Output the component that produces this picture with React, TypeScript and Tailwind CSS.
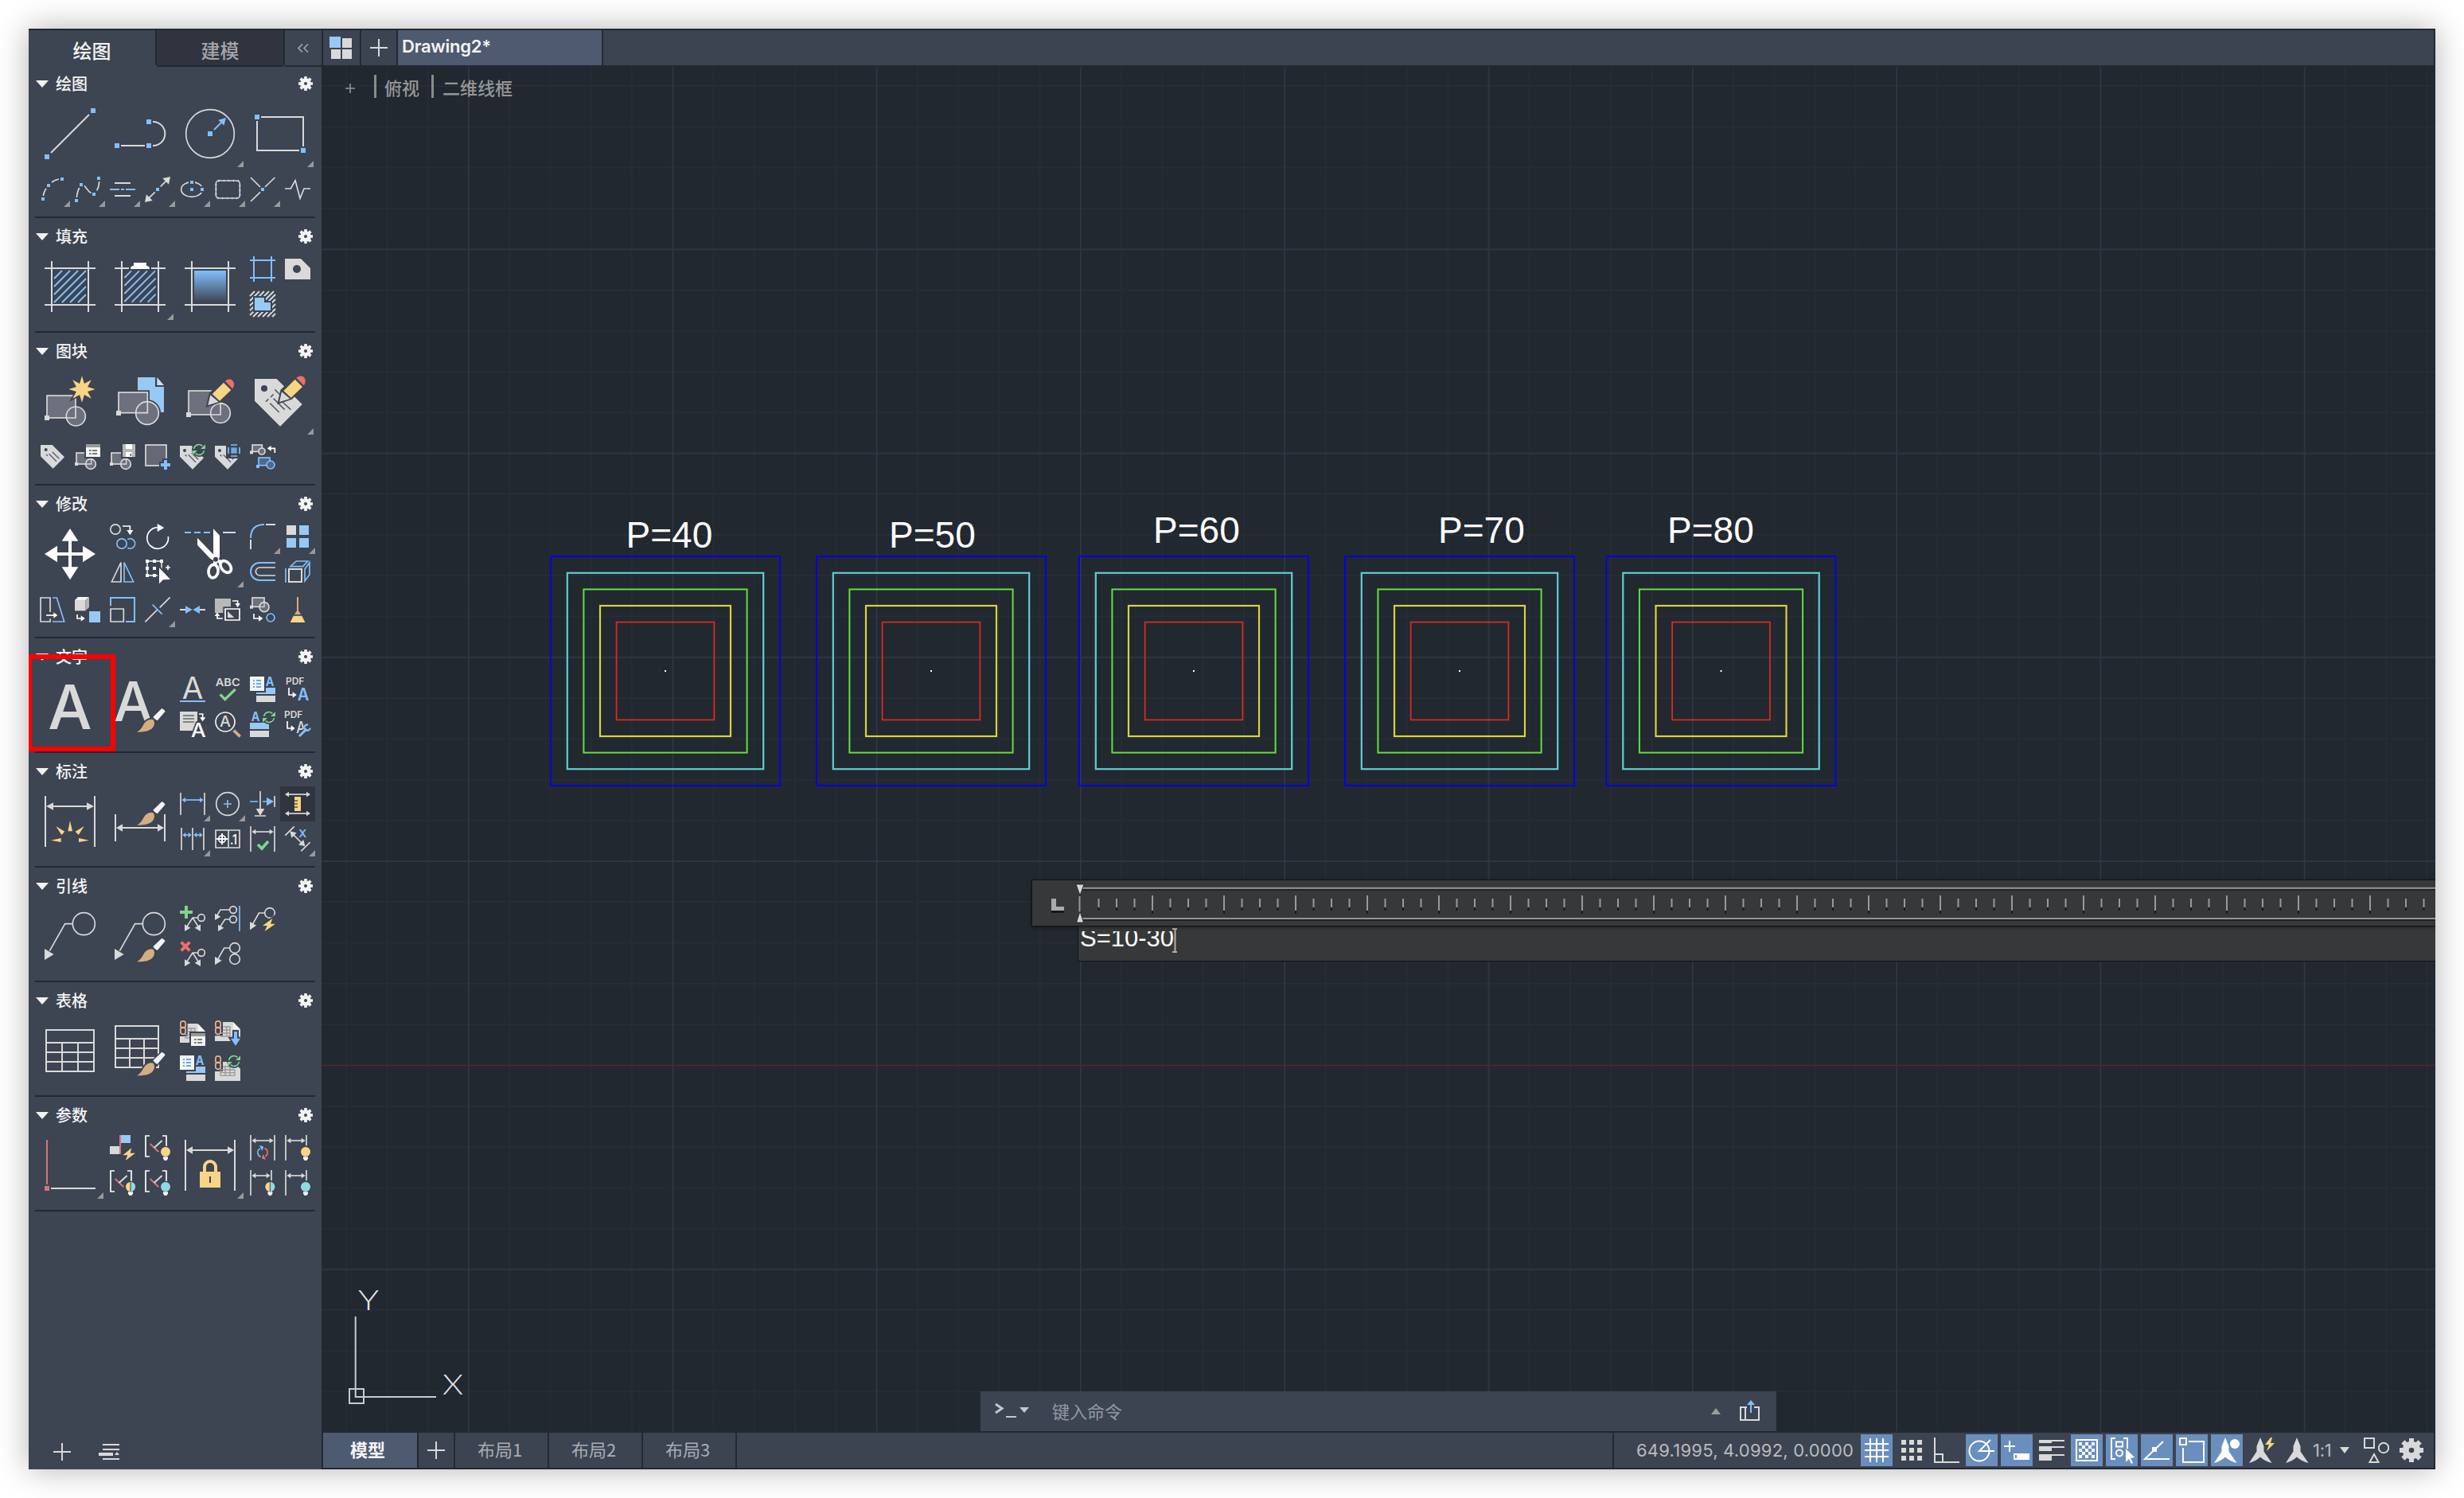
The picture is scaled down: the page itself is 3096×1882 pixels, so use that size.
import React from "react";

const G = "#d9d9d9";
const B = "#80c0fc";
const LB = "#97c9f5";
const Y = "#f8d486";
const R = "#ee6f69";
const GR = "#7dd68a";
const TAN = "#d2ae80";
const TEAL = "#8cdbe4";
const BG = "#3d4452";
const BF = "#6d717d";
const W = "#ffffff";

type Kids = { children?: React.ReactNode };

/* Tool cells. Drawing units are a third of a pixel; x and y give the cell's origin. */
function Big({ x, y, tri, children }: Kids & { x: number; y: number; tri?: boolean }) {
  return (
    <svg className="col-span-2 row-span-2 size-22 overflow-visible" viewBox={`${x} ${y} 264 264`} fill="none">
      {children}
      {tri && <path d={`M${x + 258} ${y + 234}v24h-24z`} fill="#999" />}
    </svg>
  );
}
function Sm({ x, y, tri, first, children }: Kids & { x: number; y: number; tri?: boolean; first?: string }) {
  return (
    <svg className={`size-11 overflow-visible ${first ?? ""}`} viewBox={`${x} ${y} 132 132`} fill="none">
      {children}
      {tri && <path d={`M${x + 132} ${y + 108}v24h-24z`} fill="#999" />}
    </svg>
  );
}

const Sq = ({ p, s = 12, c = B }: { p: number[][]; s?: number; c?: string }) => (
  <>{p.map(([x, y], i) => <rect key={i} x={x} y={y} width={s} height={s} fill={c} />)}</>
);
const L = ({ d, c = G, w = 5, f = "none" }: { d: string; c?: string; w?: number; f?: string }) => (
  <path d={d} stroke={c} strokeWidth={w} fill={f} />
);
const F = ({ d, c = G, o }: { d: string; c?: string; o?: boolean }) => (
  <path d={d} fill={c} stroke={o ? BG : "none"} strokeWidth={o ? 12 : 0} paintOrder="stroke" />
);
const C = ({ x, y, r, c = G, w = 5, f = "none" }: { x: number; y: number; r: number; c?: string; w?: number; f?: string }) => (
  <circle cx={x} cy={y} r={r} stroke={c} strokeWidth={w} fill={f} />
);
/* Letter used inside an icon, fitted between x and x+w with its baseline at y. */
const T = ({ x, y, w, s, c = G, b = 600, t = "A", o }: { x: number; y: number; w: number; s: number; c?: string; b?: number; t?: string; o?: boolean }) => (
  <text x={x} y={y} textLength={w} lengthAdjust="spacingAndGlyphs" fontSize={s} fontWeight={b} fill={c}
    fontFamily="Inter, sans-serif" stroke={o ? BG : "none"} strokeWidth={o ? 10 : 0} paintOrder="stroke">{t}</text>
);
/* Horizontal double-headed dimension arrow. */
const Dim = ({ a, b, y, c = G, h = 18, k = 10, w = 5 }: { a: number; b: number; y: number; c?: string; h?: number; k?: number; w?: number }) => (
  <>
    <path d={`M${a + h - 2} ${y}H${b - h + 2}`} stroke={c} strokeWidth={w} />
    <path d={`M${a} ${y}l${h} ${-k}v${2 * k}zM${b} ${y}l${-h} ${-k}v${2 * k}z`} fill={c} />
  </>
);
const Brush = ({ dy }: { dy: number }) => (
  <g transform={`translate(0 ${dy})`}>
    <path d="M426 740C444 730 448 715 456 704Q468 691 484 692Q493 696 492 709C488 734 462 741 426 740Z" fill={TAN} stroke={BG} strokeWidth="12" paintOrder="stroke" />
    <path d="M487 683L520 651Q528 655 533 662L503 697Q492 692 487 683Z" fill="#f4f4f4" stroke={BG} strokeWidth="10" paintOrder="stroke" />
  </g>
);
const Pencil = ({ dx = 0, dy = 0 }: { dx?: number; dy?: number }) => (
  <g transform={`translate(${dx} ${dy})`}>
    <path d="M694 327L704 284L760 230Q775 222 788 234Q797 250 786 264L738 312Z" fill={BG} stroke={BG} strokeWidth="12" />
    <path d="M694 327L703 289L734 315Z" fill={G} />
    <path d="M710 285L753 242L781 270L738 311Z" fill={Y} />
    <path d="M758 236Q774 222 787 234Q798 250 786 265Z" fill={R} />
  </g>
);
const Refresh = ({ x, y, r = 19, a = GR, b = GR }: { x: number; y: number; r?: number; a?: string; b?: string }) => (
  <g transform={`translate(${x} ${y}) scale(${r / 19})`}>
    <circle r="27" fill={BG} />
    <path d="M-19 -3A19 19 0 0 1 13 -14" stroke={a} strokeWidth="5" />
    <path d="M24 -20V-3H6Z" fill={a} />
    <path d="M19 3A19 19 0 0 1 -13 14" stroke={b} strokeWidth="5" />
    <path d="M-24 20V3H-6Z" fill={b} />
  </g>
);
const Hatch = ({ x, y, s, step, off = 0, c = B, w = 6 }: { x: number; y: number; s: number; step: number; off?: number; c?: string; w?: number }) => {
  let d = "";
  for (let k = step - off; k < 2 * s; k += step) {
    const x1 = Math.max(0, k - s);
    const x2 = Math.min(s, k);
    d += `M${x + x1} ${y + k - x1}L${x + x2} ${y + k - x2}`;
  }
  return <path d={d} stroke={c} strokeWidth={w} />;
};
const MiniBlock = ({ dx = 0 }: { dx?: number }) => (
  <g transform={`translate(${dx} 0)`}>
    <rect x="198" y="507" width="57" height="42" fill={BF} stroke={G} strokeWidth="5" />
    <C x={252} y={549} r={19} f={BF} />
    <L d="M254 530V549H234" w={4} />
    <Sq p={[[192, 543]]} s={12} c={G} />
  </g>
);
const Panel = ({ x, y }: { x: number; y: number }) => (
  <g transform={`translate(${x} ${y})`}>
    <path d="M-6 -6H60V54H-6Z" fill={BG} />
    <path d="M0 12H54V48H0Z" fill="#f4f4f4" />
    <path d="M0 0H54V12H0Z" fill="#999" />
    <path d="M12 24H20M24 24H42M12 36H20M24 36H42" stroke="#555" strokeWidth="5" />
  </g>
);
const TextAlign = ({ dx = 0, dy = 0 }: { dx?: number; dy?: number }) => (
  <g transform={`translate(${dx} ${dy})`}>
    <F d="M852 180H906V234H852Z" c="#f4f4f4" />
    <L d="M864 195H870M876 195H894M864 207H870M876 207H894M864 219H870M876 219H894" c="#3f8ae0" />
    <T x={911} y={216} w={32} s={49} c={B} b={700} />
    <F d="M876 246V240H912V222H948V246Z" c={LB} />
    <F d="M876 252H948V276H876Z" />
  </g>
);
const Tag = ({ dx = 0 }: { dx?: number }) => (
  <g transform={`translate(${dx} 0)`}>
    <F d="M588 480H632L678 526L636 569L588 521Z" />
    <circle cx="606" cy="498" r="6" fill={BG} />
    <L d="M620 514L648 542M632 508L658 532M608 514L614 520" c="#5b5f66" w={4} />
  </g>
);
const Link = ({ x, y }: { x: number; y: number }) => (
  <g transform={`translate(${x} ${y})`} stroke="#eab48a" strokeWidth="5">
    <rect x="2.5" y="2.5" width="19" height="26" rx="9" />
    <rect x="2.5" y="26" width="19" height="26" rx="9" />
  </g>
);
const Bulb = ({ x, y, c, half }: { x: number; y: number; c: string; half?: boolean }) => (
  <g transform={`translate(${x} ${y})`}>
    <circle r="22" fill={BG} />
    <path d="M-9 19H9V26L4 33H-4L-9 26Z" fill="#f4f4f4" />
    <circle r="18" fill={c} />
    {half && <path d="M0 -18A18 18 0 0 1 0 18Z" fill={TEAL} />}
    {half && <path d="M0 -18V18" stroke={BG} strokeWidth="3" />}
  </g>
);
const Bracket = ({ dx = 0, dy = 0, c, half }: { dx?: number; dy?: number; c: string; half?: boolean }) => (
  <g transform={`translate(${dx} ${dy})`}>
    <L d="M474 801H459V879H474M522 801H537V840" c={W} />
    <L d="M476 831L508 862" c="#d67575" w={6} />
    <L d="M491 846L521 819" w={6} />
    <Bulb x={534} y={861} c={c} half={half} />
  </g>
);
const Leader = ({ dx = 0 }: { dx?: number }) => (
  <g transform={`translate(${dx} 0)`}>
    <C x={226} y={2} r={42} />
    <L d="M184 2H155L97 104" />
    <F d="M78 96L113 117L78 138Z" />
  </g>
);
const FrameLines = ({ dx = 0 }: { dx?: number }) => (
  <path transform={`translate(${dx} 0)`} d="M168 951H360M168 1089H360M195 924V1116M333 924V1116" stroke={G} strokeWidth="6" />
);

function Gear({ size, color }: { size: string; color: string }) {
  return (
    <svg className={size} viewBox="-9 -9 18 18" fill="none" stroke={color}>
      <circle r="4.4" strokeWidth="4.8" />
      {[0, 45, 90, 135].map((a) => (
        <path key={a} transform={`rotate(${a})`} d="M0 -9V-5M0 5V9" strokeWidth="3.6" />
      ))}
    </svg>
  );
}

const star = Array.from({ length: 16 }, (_, i) => {
  const r = i % 2 ? 23 : 50;
  const a = (i * Math.PI) / 8;
  return `${219 + r * Math.sin(a)},${267 - r * Math.cos(a)}`;
}).join(" ");

function Section({ title, main, row }: { title: string; main: React.ReactNode; row?: React.ReactNode }) {
  return (
    <section className="mx-2 border-b-2 border-[#222933] pb-3">
      <header className="flex h-[42px] items-center pt-1 pr-[3px]">
        <svg className="ml-px h-[9px] w-4" viewBox="0 0 16 9"><path d="M0 0H16L8 9Z" fill="#f4f4f4" /></svg>
        <h2 className="ml-[9px] text-[20px] leading-none font-medium text-[#f4f4f4]">{title}</h2>
        <span className="ml-auto"><Gear size="size-[18px]" color="#f4f4f4" /></span>
      </header>
      <div className="grid grid-cols-8 grid-rows-[44px_44px]">{main}</div>
      {row && <div className="mt-1 flex">{row}</div>}
    </section>
  );
}

function Sidebar() {
  return (
    <aside className="flex w-[368px] shrink-0 flex-col bg-[#3d4452]">
      <nav className="flex h-11 bg-[#222933] text-[24px] font-medium">
        <div className="flex h-[46px] w-[159px] items-center justify-center bg-[#3d4452] pt-1 text-[#f4f4f4]">绘图</div>
        <div className="ml-0.5 flex h-11 w-[159px] items-center justify-center border-b-0 bg-[#30343f] pt-[5px] text-[#a5a6a9] shadow-[0_2px_0_#222933]">建模</div>
        <div className="ml-0.5 flex h-11 w-[46px] items-center justify-center bg-[#3d4452] shadow-[0_2px_0_#222933]">
          <svg className="h-[11px] w-[14px]" viewBox="0 0 14 11" fill="none" stroke="#a5a6a9" strokeWidth="1.6">
            <path d="M6 .5L1 5.5L6 10.5M13 .5L8 5.5L13 10.5" />
          </svg>
        </div>
      </nav>
      <Section
        title="绘图"
        main={<>
          <Big x={132} y={312}><L d="M192 516L336 372" w={6} /><Sq s={18} p={[[168, 522], [342, 348]]} /></Big>
          <Big x={396} y={312}><L d="M456 489H546M576 399H577A45 45 0 0 1 577 489H576" w={6} /><Sq s={18} p={[[432, 480], [552, 480], [552, 390]]} /></Big>
          <Big x={660} y={312} tri><C x={792} y={444} r={91} /><Sq s={18} p={[[783, 435]]} /><L d="M807 429L837 399" c={B} w={6} /><F d="M852 384L823 392L844 413Z" c={B} /></Big>
          <Big x={924} y={312} tri><L d="M984 381H1143V492M969 396V507H1128" w={6} /><Sq s={18} p={[[960, 372], [1134, 498]]} /></Big>
        </>}
        row={<>
          <Sm x={132} y={588} tri><L d="M163 678Q166 661 174 650M195 627Q207 618 222 615" /><Sq p={[[156, 684], [177, 633], [228, 609]]} /></Sm>
          <Sm x={264} y={588} tri><L d="M289 684Q292 660 299 648M318 640L336 662L343 668M365 658Q373 645 374 624" /><Sq p={[[282, 690], [300, 630], [348, 666], [366, 606]]} /></Sm>
          <Sm x={396} y={588} tri><L d="M432 630H492M432 678H492" w={6} /><L d="M414 654H450M456 654H468M474 654H510" c={B} w={6} /></Sm>
          <Sm x={528} y={588} tri><L d="M584 664L562 686M605 643L626 622" /><F d="M546 702L552 673L575 696ZM642 606L613 612L636 635Z" /><Sq p={[[588, 648]]} /></Sm>
          <Sm x={660} y={588} tri><ellipse cx="723" cy="654" rx="40" ry="28" stroke={G} strokeWidth="5" /><Sq s={24} c={BG} p={[[711, 615], [750, 642]]} /><Sq p={[[717, 621], [756, 648], [717, 648]]} /></Sm>
          <Sm x={792} y={588} tri><rect x="814" y="621" width="90" height="66" rx="11" stroke={G} strokeWidth="4.5" /><rect x="814" y="621" width="90" height="66" rx="11" stroke={G} strokeWidth="8" strokeDasharray="3 15" /></Sm>
          <Sm x={924} y={588} tri><L d="M945 609L981 645M1036 609L999 645M945 699L981 664" /><Sq p={[[984, 648]]} /></Sm>
          <Sm x={1056} y={588}><L d="M1074 651H1096L1113 620L1131 688L1146 651H1170" /></Sm>
        </>}
      />
      <Section
        title="填充"
        main={<>
          <Big x={132} y={888}><FrameLines /><Hatch x={204} y={960} s={120} step={30} /></Big>
          <Big x={396} y={888} tri><FrameLines dx={264} /><path d="M486 940H570V960H486Z" fill={BG} /><Hatch x={469} y={961} s={118} step={30} off={4} /><F d="M492 954Q492 942 504 942L504 930H552V942Q564 942 564 954Z" c={W} /></Big>
          <Big x={660} y={888}>
            <defs><linearGradient id="fade" x1="0" y1="0" x2="0" y2="1"><stop offset="0" stopColor={B} /><stop offset="1" stopColor={BG} /></linearGradient></defs>
            <FrameLines dx={528} /><rect x="732" y="960" width="120" height="120" fill="url(#fade)" />
          </Big>
          <Sm x={924} y={888}><L d="M942 921H1038M942 987H1038M957 906V1002M1023 906V1002" c={B} w={6} /></Sm>
          <Sm x={1056} y={888}><F d="M1074 915H1134L1170 951V993H1074Z" /><circle cx="1119" cy="954" r="15" fill={BG} /></Sm>
          <Sm x={924} y={1020} first="col-start-7"><Hatch x={942} y={1038} s={96} step={18} c={G} /><path d="M954 1056H1002V1074H1026V1116H954Z" fill={BG} /><F d="M960 1062H996V1080H1020V1110H960Z" c={LB} /></Sm>
        </>}
      />
      <Section
        title="图块"
        main={<>
          <Big x={42} y={180}>
            <rect x="87" y="291" width="108" height="84" fill={BF} stroke={G} strokeWidth="5" /><C x={196} y={369} r={36} f={BF} /><L d="M195 331V375H162" /><Sq p={[[78, 366]]} s={18} c={G} />
            <polygon points={star} fill={Y} stroke={BG} strokeWidth="10" paintOrder="stroke" />
          </Big>
          <Big x={306} y={180}>
            <F d="M429 222H495V258H528V354H429Z" c={LB} /><F d="M502 222L528 252H502Z" c="#c4e0fb" />
            <rect x="357" y="279" width="109" height="77" fill={BF} stroke={BG} strokeWidth="16" /><circle cx="465" cy="357" r="51" fill={BG} />
            <rect x="357" y="279" width="109" height="77" fill={BF} stroke={G} strokeWidth="5" /><C x={465} y={357} r={43} f={BF} /><L d="M466 314V356H423" /><Sq p={[[348, 348]]} s={18} c={G} />
          </Big>
          <Big x={570} y={180}>
            <rect x="621" y="273" width="120" height="90" fill={BF} stroke={G} strokeWidth="5" /><C x={741} y={357} r={37} f={BF} /><L d="M741 320V363H706" /><Sq p={[[612, 354]]} s={18} c={G} /><Pencil />
          </Big>
          <Big x={834} y={180} tri>
            <F d="M870 228H953L1049 324L966 407L870 311Z" /><circle cx="906" cy="264" r="12" fill={BG} />
            <L d="M928 320L962 354M912 314L922 304M930 297L941 286M946 268L966 288M941 302L983 344M972 312L1006 344" c="#5b5f66" />
            <Pencil dx={269} dy={-12} />
          </Big>
        </>}
        row={<>
          <Sm x={42} y={456}><F d="M63 477H107L153 523L110 566L63 520Z" /><circle cx="83" cy="495" r="6" fill={BG} /><L d="M95 511L123 539M107 503L133 529M84 512L90 518" c="#5b5f66" w={4} /></Sm>
          <Sm x={174} y={456}><MiniBlock /><Panel x={234} y={474} /></Sm>
          <Sm x={306} y={456}><MiniBlock dx={132} /><F d="M366 468H426V528H366Z" c={BG} /><F d="M372 474H420V522H372Z" c="#b8b8b8" /><F d="M384 474H408V492H384ZM384 504H408V522H384Z" c={W} /><L d="M403 510V519" c="#444" w={4} /></Sm>
          <Sm x={438} y={456}><rect x="459" y="477" width="78" height="78" fill="#646975" stroke={G} strokeWidth="5" /><L d="M534 528V576M510 552H558" c={BG} w={24} /><L d="M534 534V570M516 552H552" c={B} w={12} /></Sm>
          <Sm x={570} y={456}><Tag /><Refresh x={660} y={495} r={19} /></Sm>
          <Sm x={702} y={456}><Tag dx={132} /><F d="M762 468H822V528H762Z" c={BG} /><F d="M781 487H803V509H781Z" c="#6fa8e0" /><L d="M780 477H804M780 519H804M771 486V510M813 486V510" c={B} /></Sm>
          <Sm x={834} y={456}>
            <rect x="861" y="477" width="37" height="25" fill={BF} stroke={G} strokeWidth="5" /><C x={897} y={501} r={12} f={BF} /><Sq p={[[852, 499]]} c={G} />
            <L d="M946 507V490H930" c={W} /><F d="M917 490L932 480V500Z" c={W} />
            <rect x="885" y="525" width="42" height="29" fill="#4f6a8b" stroke={B} strokeWidth="5" /><C x={930} y={552} r={15} c={B} f="#4f6a8b" /><Sq p={[[876, 552]]} />
          </Sm>
        </>}
      />
      <Section
        title="修改"
        main={<>
          <Big x={42} y={756}><L d="M174 830V950M120 888H230" c={W} w={12} /><F c={W} d="M174 792L205 839H143ZM174 985L205 937H143ZM78 888L126 857V919ZM270 888L222 857V919Z" /></Big>
          <Sm x={306} y={756}><C x={345} y={795} r={18.5} /><L d="M372 783H400V802" c={W} /><F d="M400 817L388 798H412Z" c={W} /><C x={369} y={849} r={18.5} c={B} /><L d="M391 833A18.5 18.5 0 1 1 391 865" c={B} /></Sm>
          <Sm x={438} y={756}><L d="M544 822A40 40 0 1 1 503 788" c={W} /><F d="M503 774L529 789L503 804Z" c={W} /></Sm>
          <Big x={570} y={756} tri>
            <L d="M606 807H630M642 807H666M678 807H702" c={B} w={6} /><L d="M750 807H798" w={6} />
            <F d="M654 827L724 900L714 912Q704 908 697 900L654 854Z" c={W} /><F d="M714 793L738 818V900L728 916L714 900Z" c={W} />
            <ellipse cx="714" cy="953" rx="18" ry="25" transform="rotate(8 714 953)" stroke={W} strokeWidth="11" />
            <ellipse cx="761" cy="936" rx="17" ry="25" transform="rotate(-38 761 936)" stroke={W} strokeWidth="11" />
            <L d="M722 912L720 932M728 912L744 920" c={W} w={14} /><circle cx="723" cy="908" r="9" fill={BG} />
          </Big>
          <Sm x={834} y={756} tri><L d="M855 828Q855 777 906 777" c={B} w={6} /><L d="M912 777H948M855 834V870" w={6} /></Sm>
          <Sm x={966} y={756} tri><Sq s={36} c={G} p={[[990, 780]]} /><Sq s={36} c={LB} p={[[1038, 780], [990, 828], [1038, 828]]} /></Sm>
          <Sm x={306} y={888}><L d="M331 993L366 920V993Z" /><L d="M413 993L378 920V993Z" c={B} /></Sm>
          <Sm x={438} y={888}><L d="M465 915H519V969H465Z" c={W} w={4} /><Sq c={W} p={[[459, 909], [486, 909], [513, 909], [459, 936], [486, 936], [459, 963], [486, 963]]} /><F d="M510 940V1000L525 985L552 984Z" c={W} o /><L d="M534 939H552M543 930V948" c={W} /></Sm>
          <Sm x={834} y={888}><L d="M948 921H888A33 33 0 0 0 888 987H948" c={B} w={6} /><L d="M948 939H889A15 15 0 0 0 889 969H948" /></Sm>
          <Sm x={966} y={888}><L d="M999 945H1047V993H999Z" w={6} /><L d="M987 942V996M1005 935L1027 915H1070L1052 935ZM1059 990V945L1077 920V965Z" c={B} /></Sm>
        </>}
        row={<>
          <Sm x={42} y={1032}><L d="M99 1107V1053H63V1143H99V1132" /><L d="M108 1053H124L152 1143H108" c={B} /><L d="M84 1119H114" c={W} /><F d="M127 1119L112 1108V1130Z" c={W} /></Sm>
          <Sm x={174} y={1032}><F d="M192 1062H232V1102H192Z" /><F d="M192 1062L204 1050H246L232 1062Z" c="#f4f4f4" /><F d="M232 1062L246 1050V1089L232 1102Z" c="#b5b5b5" /><Sq s={42} c={LB} p={[[246, 1104]]} /><L d="M201 1116V1131H216" c={W} /><F d="M230 1131L215 1120V1142Z" c={W} /></Sm>
          <Sm x={306} y={1032}><L d="M327 1084V1053H417V1143H384" c={B} w={6} /><L d="M327 1095H376V1143H327Z" /></Sm>
          <Sm x={438} y={1032} tri><L d="M457 1144L502 1099M512 1090L551 1051" /><L d="M485 1079L521 1115" c={B} /></Sm>
          <Sm x={570} y={1032}><L d="M588 1098H612M660 1098H684" w={6} /><F d="M609 1083L635 1098L609 1113ZM663 1083L637 1098L663 1113Z" c={B} /></Sm>
          <Sm x={702} y={1032}><F d="M720 1056H780V1110H720Z" c="#b8b8b8" /><path d="M759 1095H813V1137H759Z" fill={BG} stroke={BG} strokeWidth="16" /><L d="M759 1095H813V1137H759Z" c={W} /><F d="M768 1104V1128H793Z" /><L d="M786 1065H806V1076M750 1131H729V1120" c={W} /><F d="M806 1089L796 1074H816ZM729 1108L719 1122H739Z" c={W} /></Sm>
          <Sm x={834} y={1032}><rect x="861" y="1053" width="45" height="34" fill={BF} stroke={G} strokeWidth="5" /><C x={906} y={1088} r={18} f={BF} /><L d="M906 1070V1087H888" w={4} /><Sq p={[[852, 1082]]} c={G} /><L d="M867 1113V1131H886" c={W} /><F d="M901 1131L885 1120V1142Z" c={W} /><C x={930} y={1128} r={15} c={B} /></Sm>
          <Sm x={966} y={1032}><L d="M1032 1050V1106" c={TAN} w={6} /><F d="M1020 1116L1027 1104H1037L1044 1116Z" c={TAN} /><F d="M1016 1121H1048L1060 1146H1004Z" c={Y} /></Sm>
        </>}
      />
      <Section
        title="文字"
        main={<>
          <Big x={42} y={162}><T x={91} y={378} w={166} s={231} b={500} /></Big>
          <Big x={306} y={162}><T x={339} y={348} w={146} s={206} b={500} /><Brush dy={-351} /></Big>
          <Sm x={570} y={162}><T x={596} y={264} w={80} s={115} b={400} /><L d="M588 273H684" c={B} w={6} /></Sm>
          <Sm x={702} y={162}><T x={722} y={215} w={93} s={40} b={600} t="ABC" /><L d="M740 247L758 266L797 228" c={GR} w={10} /></Sm>
          <Sm x={834} y={162}><TextAlign /></Sm>
          <Sm x={966} y={162}><T x={987} y={210} w={70} s={34} b={600} t="PDF" /><L d="M999 222V249H1014" c={W} /><F d="M1028 249L1013 238V260Z" c={W} /><T x={1031} y={270} w={44} s={66} c={B} /></Sm>
          <Sm x={570} y={294}><F d="M588 312H654V384H588Z" /><L d="M600 327H642M600 339H642M600 351H642" c="#62666e" /><T x={630} y={408} w={56} s={74} c={W} o b={500} /><path d="M655 312H690V352H655Z" fill={BG} /><L d="M660 321H674V336" c={W} /><F d="M674 349L663 334H685Z" c={W} /></Sm>
          <Sm x={702} y={294}><C x={759} y={351} r={36} c="#f4f4f4" /><T x={738} y={369} w={42} s={54} b={500} /><L d="M791 383L815 406" c={TAN} w={11} /></Sm>
          <Sm x={834} y={294}><T x={857} y={348} w={32} s={49} c={B} b={700} /><F d="M852 354H924V378H852Z" c={LB} /><Refresh x={924} y={333} /><F d="M852 384H924V408H852Z" /></Sm>
          <Sm x={966} y={294}><T x={981} y={336} w={70} s={34} b={600} t="PDF" /><L d="M993 348V375H1008" c={W} /><F d="M1022 375L1007 364V386Z" c={W} /><T x={1027} y={394} w={36} s={62} b={500} /><L d="M1038 405L1066 377" c={BG} w={18} /><L d="M1038 405L1066 377" c={B} w={9} /><L d="M1071 362A11 11 0 1 0 1079 374" c={B} w={7} /></Sm>
        </>}
      />
      <Section
        title="标注"
        main={<>
          <Big x={42} y={594}><L d="M81 630V822M267 630V822" w={6} /><Dim a={84} b={264} y={669} h={27} k={14} w={6} /><F c={Y} d="M174 723L183 763H166ZM121 744L154 764L142 777ZM227 744L206 777L194 764ZM102 797L140 789V804ZM246 797L207 789V804Z" /></Big>
          <Big x={306} y={594}><L d="M345 699V801M531 699V801" w={6} /><Dim a={348} b={528} y={750} h={24} k={14} w={6} /><Brush dy={0} /></Big>
          <Sm x={570} y={594} tri><L d="M591 618V702M681 618V702" /><Dim a={595} b={677} y={645} c={B} h={14} /></Sm>
          <Sm x={702} y={594} tri><C x={768} y={660} r={43} /><L d="M753 660H783M768 645V675" c={B} /></Sm>
          <Sm x={834} y={594}><L d="M891 612V682M870 705H912M945 630V672" /><F d="M891 704L875 678H907Z" /><L d="M852 651H882M900 651H918" c={B} /><F d="M942 651L915 635V667Z" c={B} /></Sm>
          <Sm x={966} y={594}><F d="M966 594H1098V726H966Z" c="#30343f" /><Dim a={984} b={1080} y={624} h={15} /><Dim a={984} b={1080} y={696} h={15} /><F d="M1020 633H1044V687H1020Z" c={Y} /><L d="M1020 648H1032M1020 660H1032M1020 672H1032" c="#5b5032" /></Sm>
          <Sm x={570} y={726} tri><L d="M594 750V834M636 750V834M678 750V834" /><Dim a={598} b={632} y={777} c={B} h={12} /><Dim a={640} b={674} y={777} c={B} h={12} /></Sm>
          <Sm x={702} y={726}><L d="M723 759H813V825H723ZM771 759V825" /><C x={747} y={792} r={13} c={W} /><L d="M726 792H768M747 771V813" c={W} w={6} /><T x={777} y={812} w={27} s={50} b={500} c={W} t=".1" /></Sm>
          <Sm x={834} y={726}><L d="M855 744V840M945 744V840" /><Dim a={859} b={941} y={765} h={15} /><L d="M882 813L897 828L921 801" c={GR} w={11} /></Sm>
          <Sm x={966} y={726} tri><L d="M985 779L1019 745M1045 838L1079 804M1012 772L1050 810" /><F d="M1003 763L1028 769L1009 788ZM1060 820L1035 814L1054 795Z" /><T x={1036} y={785} w={30} s={40} c={B} t="X" /></Sm>
        </>}
      />
      <Section
        title="引线"
        main={<>
          <Big x={42} y={-84}><Leader /></Big>
          <Big x={306} y={-84}><Leader dx={264} /><Brush dy={-595} /></Big>
          <Sm x={570} y={-84}><L d="M612 -66V-18M588 -42H636" c={GR} w={12} /><C x={669} y={-21} r={13} /><L d="M655 -21H636L614 13M636 -21L658 13" /><F d="M606 4L628 17L606 30ZM666 4V30L644 17Z" /></Sm>
          <Sm x={702} y={-84}><C x={789} y={-51} r={13} /><C x={789} y={-15} r={13} /><L d="M776 -51H741L727 -28M776 -15H758L740 13" /><F d="M720 -37L742 -25L720 -12ZM732 5L754 17L732 30Z" /><L d="M813 -66V30" c={B} /></Sm>
          <Sm x={834} y={-84}><C x={927} y={-39} r={19} /><L d="M907 -39H886L862 4" /><F d="M852 -6L876 8L852 25Z" /><F d="M937 -18L900 9H917L908 30L948 2H930Z" c={Y} o /></Sm>
          <Sm x={570} y={48} first="col-start-5"><L d="M593 71L625 103M625 71L593 103" c={R} w={12} /><C x={669} y={111} r={13} /><L d="M655 111H636L614 145M636 111L658 145" /><F d="M606 136L628 149L606 162ZM666 136V162L644 149Z" /></Sm>
          <Sm x={702} y={48}><C x={795} y={93} r={19} /><C x={795} y={135} r={19} /><L d="M775 93H755L731 136" /><F d="M720 126L746 140L720 157Z" /></Sm>
        </>}
      />
      <Section
        title="表格"
        main={<>
          <Big x={42} y={348}><L d="M84 402H264V558H84ZM84 450H264M84 486H264M84 522H264M144 450V558M204 450V558" w={6} /></Big>
          <Big x={306} y={348}><L d="M345 387H507V543H345ZM345 435H507M345 471H507M345 507H507M399 435V543M453 435V543" w={6} /><Brush dy={-166} /></Big>
          <Sm x={570} y={348}><F d="M617 378H654L684 408V450H588V426H617Z" /><F d="M656 378L684 408H656Z" c="#f4f4f4" /><L d="M617 396H645V432H606M617 408H645M606 420H645M630 396V432" c="#999" w={4} /><Link x={588} y={366} /><Panel x={630} y={414} /></Sm>
          <Sm x={702} y={348}><F d="M750 372H787L816 400V444H720V424H750Z" /><F d="M789 372L816 400H789Z" c="#f4f4f4" /><L d="M750 390H777V426H741M750 402H777M741 414H777M764 390V426" c="#999" w={4} /><Link x={720} y={366} /><F d="M792 408H804V434H816L798 462L780 434H792Z" c={B} o /></Sm>
          <Sm x={570} y={480} first="col-start-5"><TextAlign dx={-264} dy={318} /></Sm>
          <Sm x={702} y={480}><F d="M720 558H750V522H790L816 548V594H720Z" /><L d="M750 540H792M741 552H795M741 563H795M741 574H795M741 552V574M759 540V574M777 540V574M795 552V574" c="#999" w={4} /><Link x={720} y={498} /><Refresh x={792} y={519} r={19} /></Sm>
        </>}
      />
      <Section
        title="参数"
        main={<>
          <Big x={42} y={780} tri><L d="M87 816V984" c="#d67575" w={6} /><Sq s={18} c="#d67575" p={[[78, 990]]} /><L d="M102 999H270" w={6} /></Big>
          <Sm x={306} y={780}><F d="M366 798H402V828H366Z" c={LB} /><F d="M324 840H360V870H324Z" /><L d="M363 798V870" c="#d67575" w={6} /><F d="M406 847L373 874H391L383 894L420 866H401Z" c={Y} /></Sm>
          <Sm x={438} y={780}><Bracket c={Y} /></Sm>
          <Big x={570} y={780} tri><L d="M609 816V1008M795 816V1008" w={6} /><Dim a={612} b={792} y={855} h={24} k={14} w={6} /><F d="M663 936H741V996H663Z" c={Y} /><L d="M681 936V918A21 21 0 0 1 723 918V936" c={Y} w={12} /><L d="M702 954V978" c={BG} w={6} /></Big>
          <Sm x={834} y={780}><L d="M855 798V894M945 798V894" /><Dim a={859} b={941} y={819} h={15} /><g transform="rotate(-75 900 864)"><Refresh x={900} y={864} r={18} a={B} b={R} /></g></Sm>
          <Sm x={966} y={780}><L d="M987 798V894M1065 798V838" /><Dim a={991} b={1061} y={819} h={15} /><Bulb x={1062} y={861} c={Y} /></Sm>
          <Sm x={306} y={912}><Bracket dx={-132} dy={132} c={Y} half /></Sm>
          <Sm x={438} y={912}><Bracket dy={132} c={TEAL} /></Sm>
          <Sm x={834} y={912}><L d="M855 930V1026M933 930V970" /><Dim a={859} b={929} y={951} h={15} /><Bulb x={928} y={993} c={Y} half /></Sm>
          <Sm x={966} y={912}><L d="M987 930V1026M1065 930V970" /><Dim a={991} b={1061} y={951} h={15} /><Bulb x={1062} y={993} c={TEAL} /></Sm>
        </>}
      />
      <footer className="mt-auto flex h-[44px] items-center gap-[35px] pl-[31px]">
        <svg className="size-[22px]" viewBox="0 0 22 22" stroke={G} strokeWidth="2"><path d="M11 0V22M0 11H22" /></svg>
        <svg className="h-[22px] w-[26px]" viewBox="0 0 26 22" stroke={G} strokeWidth="2">
          <path d="M5 2H26M5 8H26M5 20H26" /><path d="M0 14H18" strokeWidth="4" /><path d="M20 15L23 11L26 15Z" fill={G} stroke="none" />
        </svg>
      </footer>
    </aside>
  );
}

const squares = [
  { x: 836, label: "P=40", tx: 786.5, ty: 688 },
  { x: 1170, label: "P=50", tx: 1117, ty: 688 },
  { x: 1500, label: "P=60", tx: 1449, ty: 682 },
  { x: 1834, label: "P=70", tx: 1807, ty: 682 },
  { x: 2162.5, label: "P=80", tx: 2095, ty: 682 },
];
const rings = [
  { h: 144, c: "#0000f0", w: 1.8 },
  { h: 123.2, c: "#5ccfd0", w: 2.2 },
  { h: 102.6, c: "#62e03a", w: 2 },
  { h: 82, c: "#d8d33c", w: 2.2 },
  { h: 61.4, c: "#d82a20", w: 1.8 },
];
const steps = (from: number, to: number) => {
  const out: number[] = [];
  for (let i = from; i <= to; i++) out.push(i);
  return out;
};

function Drawing() {
  return (
    <svg className="absolute inset-0 size-full" viewBox="404 84 2656 1714" fill="none">
      {steps(-3, 48).map((i) => i % 5 !== 0 && <path key={i} d={`M${589 + i * 51.26} 84V1798`} stroke="#272c36" strokeWidth="2" />)}
      {steps(-4, 28).map((i) => i % 5 !== 0 && <path key={i} d={`M404 ${313.2 + i * 51.26}H3060`} stroke="#272c36" strokeWidth="2" />)}
      {steps(0, 9).map((i) => <path key={i} d={`M${589 + i * 256.3} 84V1798`} stroke="#2f3542" strokeWidth="2" />)}
      {[0, 1, 2, 3, 5].map((i) => <path key={i} d={`M404 ${313.2 + i * 256.3}H3060`} stroke="#2f3542" strokeWidth="2" />)}
      <path d="M404 1338.4H3060" stroke="#5a262c" strokeWidth="1.5" />
      {squares.map((s) => (
        <g key={s.label}>
          {rings.map((r) => (
            <rect key={r.h} x={s.x - r.h} y={843 - r.h} width={2 * r.h} height={2 * r.h} stroke={r.c} strokeWidth={r.w} />
          ))}
          <rect x={s.x - 1} y={842} width="2" height="2" fill="#fff" />
          <text x={s.tx} y={s.ty} fontSize="46" fill="#fff" fontFamily="'Liberation Sans', sans-serif">{s.label}</text>
        </g>
      ))}
      <g stroke="#c9cbcf" strokeWidth="2">
        <path d="M446.7 1654V1755H548" />
        <rect x="439" y="1745" width="18" height="18" />
      </g>
      <text x="450" y="1646" fontSize="35" textLength="26" lengthAdjust="spacingAndGlyphs" fontWeight="300" fill="#e4e5e7" fontFamily="Lato, sans-serif">Y</text>
      <text x="556" y="1752" fontSize="35" textLength="26" lengthAdjust="spacingAndGlyphs" fontWeight="300" fill="#e4e5e7" fontFamily="Lato, sans-serif">X</text>
    </svg>
  );
}

function TextEditor() {
  return (
    <div className="absolute top-[1021px] left-[892px] w-[1764px]">
      <div className="relative z-10 h-[59px] border border-r-0 border-[#121315] bg-[#373839] shadow-[0_1px_4px_rgba(0,0,0,0.5)]">
        <svg className="block h-[57px] w-[1763px]" viewBox="1297 1106 1763 57" fill="none">
          <path d="M1360 1118H3060M1360 1156H3060" stroke="#1c1c1c" strokeWidth="1.5" />
          <path d="M1358 1115.7H3060M1358 1154H3060" stroke="#949494" strokeWidth="2" />
          {steps(1, 75).map((i) => {
            const x = 1358 + i * 22.5;
            const major = i % 4 === 0;
            return (
              <g key={i} strokeWidth="2">
                <path d={major ? `M${x} 1125V1144` : `M${x} 1129V1140`} stroke="#989898" />
                <path d={major ? `M${x} 1144V1148` : `M${x} 1140V1144`} stroke="#18191a" />
              </g>
            );
          })}
          <path d="M1356.500 1126V1146" stroke="#989898" strokeWidth="2" />
          <path d="M1352 1111H1362L1357 1125ZM1352.500 1159L1357 1145L1361.500 1159Z" fill="#d6d6d6" stroke="#17181a" strokeWidth="0.8" />
          <path d="M1321 1131H1327V1141H1337V1147H1321Z" fill="#17181a" />
          <path d="M1321 1129H1327V1139H1337V1144H1321Z" fill="#ababab" />
        </svg>
      </div>
      <div className="relative -mt-px ml-[58px] h-[45px] border border-r-0 border-[#121315] bg-[#373839]">
        <div className="absolute top-[6px] left-[2px] h-[30px] w-[125px] overflow-hidden">
          <div className="-mt-[13px] font-['Liberation_Sans',Arial,sans-serif] text-[31px] leading-[44px] whitespace-nowrap text-white">S=10-30</div>
        </div>
        <svg className="absolute top-[2px] left-[117px] h-[31px] w-[8px]" viewBox="0 0 8 31" stroke="#b9aca4" strokeWidth="2" fill="none">
          <path d="M1 1H7M1 30H7M4.500 1V30" />
        </svg>
      </div>
    </div>
  );
}

function CommandLine() {
  return (
    <div className="absolute bottom-0 left-[828px] flex h-[50px] w-[1000px] items-center bg-[#3c4452] pl-[18px]">
      <svg className="h-[22px] w-[44px]" viewBox="0 0 44 22" fill="none">
        <path d="M1 2L9 7.500L1 13" stroke="#c4c6ca" strokeWidth="3" />
        <path d="M14 18H27" stroke="#c4c6ca" strokeWidth="2" />
        <path d="M31 6H43L37 13Z" fill="#c4c6ca" />
      </svg>
      <span className="ml-[28px] pb-0.5 text-[22px] leading-none text-[#9298a1]">键入命令</span>
      <svg className="ml-auto h-2 w-3" viewBox="0 0 12 8"><path d="M6 0L12 8H0Z" fill="#9b9b9b" /></svg>
      <svg className="mr-[21px] mb-[3px] ml-6 h-[26px] w-[25px]" viewBox="0 0 25 26" fill="none" strokeWidth="2">
        <path d="M9 9H1V25H24V9H18M7 9V25" stroke={G} />
        <path d="M14 5V16" stroke={B} />
        <path d="M14 0L19 6H9Z" fill={B} />
      </svg>
    </div>
  );
}

function Tool({ on, w = "w-10", children }: Kids & { on?: boolean; w?: string }) {
  return (
    <div className={`${w} h-10 shrink-0 ${on ? "bg-[#6a8fbe]" : ""}`}>
      <svg className="size-10 overflow-visible" viewBox="0 0 40 40" fill="none" stroke={on ? "#fff" : G} strokeWidth="2">{children}</svg>
    </div>
  );
}
const Scale = ({ c, dx = 0 }: { c: string; dx?: number }) => (
  <path transform={`translate(${dx} 0)`} d="M18 4L22.500 15V21.500L32.500 36Q24 34 18 28.500Q12 34 4 36L13.500 21.500V15Z" fill={c} stroke="none" />
);

function StatusBar() {
  const checks: number[][] = [];
  for (let i = 0; i < 25; i++) if (i % 2 === 0) checks.push([10 + (i % 5) * 4, 10 + Math.floor(i / 5) * 4]);
  return (
    <div className="flex h-12 shrink-0 gap-0.5 border-y-2 border-[#222933] bg-[#222933] pr-0.5 pl-0.5 text-[22px]">
      <div className="flex w-[118px] items-center justify-center bg-[#4e5a6f] pr-1.5 pb-1 font-bold text-[#f4f4f4]">模型</div>
      <div className="flex w-11 items-center justify-center bg-[#3c4452]">
        <svg className="size-[22px]" viewBox="0 0 22 22" stroke={G} strokeWidth="2"><path d="M11 0V22M0 11H22" /></svg>
      </div>
      {["布局1", "布局2", "布局3"].map((t) => (
        <div key={t} className="flex w-[116px] items-center justify-center bg-[#3c4452] pr-1 pb-1 text-[#a9acb2]">{t}</div>
      ))}
      <div className="flex-1 bg-[#3c4452]" />
      <div className="flex w-[1030px] shrink-0 items-center bg-[#3c4452] pl-[28px]">
        <span className="w-[282px] shrink-0 font-[Inter,sans-serif] text-[22px] leading-none tracking-[0.22px] whitespace-nowrap text-[#b9bbbe]">649.1995, 4.0992, 0.0000</span>
        <div className="flex gap-1">
          <Tool on><path d="M12 5V35M20 5V35M28 5V35M5 12H35M5 20H35M5 28H35" /></Tool>
          <Tool><Sq s={4} c={G} p={[[8, 8], [18, 8], [28, 8], [8, 18], [18, 18], [28, 18], [8, 28], [18, 28], [28, 28]].map(([a, b]) => [a, b])} /></Tool>
          <Tool><path d="M5 4V35H36M5 25H15V35" /></Tool>
          <Tool on><circle cx="17" cy="21" r="12.5" /><path d="M36 21H17L31 7" /></Tool>
          <Tool on><path d="M4 15H18M11 8V22" /><path d="M16 24H36V32H16Z" fill="#fff" stroke="none" /><path d="M19 26V30" stroke="#6a8fbe" /></Tool>
          <Tool><path stroke="none" fill={G} d="M4 7H36V9H20V11H4ZM4 15H36V17H20V21H4ZM4 25H36V27H20V33H4Z" /></Tool>
          <Tool on><rect x="7" y="7" width="26" height="26" /><g stroke="none"><Sq s={4} c="#fff" p={checks} /></g></Tool>
          <Tool on><path d="M12 5H7V31H12M22 5H27V18" /><rect x="13" y="9.500" width="8" height="6" /><circle cx="17" cy="23.500" r="4" /><path d="M25 18V35L29 31L32 37L34 36L31 30L36 29Z" fill="#fff" stroke="#6a8fbe" strokeWidth="1" paintOrder="stroke" /></Tool>
          <Tool on><path d="M36 31H5L28 9" /><rect x="14" y="16" width="6" height="6" fill="#fff" stroke="none" /></Tool>
          <Tool on><rect x="5" y="5" width="8" height="8" /><path d="M16 9H35V35H9V17" /></Tool>
          <Tool on><Scale c="#fff" /><circle cx="30" cy="12" r="7.500" fill="#6a8fbe" stroke="none" /><circle cx="30" cy="12" r="6" fill="#fff" stroke="none" /></Tool>
          <Tool><Scale c={G} /><path d="M31 4L24 13H29L26 21L36 11H31L33 4Z" fill={Y} stroke={BG} strokeWidth="1.500" paintOrder="stroke" /></Tool>
          <Tool w="w-9"><Scale c={G} dx={2} /></Tool>
        </div>
        <span className="ml-1 w-[29px] shrink-0 font-[Inter,sans-serif] text-[22px] leading-none tracking-[-0.3px] text-[#b9bbbe]">1:1</span>
        <svg className="ml-[5px] h-2 w-3 shrink-0" viewBox="0 0 12 8"><path d="M0 0H12L6 8Z" fill={G} /></svg>
        <svg className="ml-[18px] h-8 w-8 shrink-0" viewBox="0 0 32 32" fill="none" stroke={G} strokeWidth="2">
          <rect x="1" y="1" width="12" height="12" /><circle cx="25" cy="13" r="6.200" /><path d="M13 21L18.500 31H7.500Z" />
        </svg>
        <span className="ml-[13px] shrink-0"><Gear size="size-[30px]" color={G} /></span>
      </div>
    </div>
  );
}

export default function App() {
  return (
    <div className="h-[1882px] w-[3096px] overflow-hidden bg-white p-9 font-['Noto_Sans_CJK_SC',sans-serif]">
      <div className="h-[1810px] w-[3024px] shadow-[0_0_38px_rgba(0,0,0,0.3)]">
        <div className="relative flex size-full overflow-hidden bg-[#222933] pt-0.5">
          <Sidebar />
          <main className="flex min-w-0 flex-1 flex-col">
            <div className="flex h-11 shrink-0 gap-0.5 pr-0.5 pl-0.5">
              <div className="flex w-[46px] items-center bg-[#3c4452] pl-2">
                <svg className="size-7" viewBox="0 0 28 28">
                  <path d="M0 0H14V14H0Z" fill={LB} /><path d="M16 2H28V14H16ZM2 16H14V28H2ZM16 16H28V28H16Z" fill={G} />
                </svg>
              </div>
              <div className="flex w-11 items-center justify-center bg-[#3c4452]">
                <svg className="size-[22px]" viewBox="0 0 22 22" stroke={G} strokeWidth="2"><path d="M11 0V22M0 11H22" /></svg>
              </div>
              <div className="flex w-[256px] items-center bg-[#4e5a6f] pb-1 pl-[5px] font-[Inter,sans-serif] text-[22px] font-semibold tracking-[-0.25px] text-[#f4f4f4]">Drawing2*</div>
              <div className="flex-1 bg-[#3c4452]" />
            </div>
            <div className="relative mt-0.5 flex-1 overflow-hidden bg-[#212830]">
              <Drawing />
              <div className="relative flex h-[49px] items-center pl-[30px] text-[22px] leading-none font-medium text-[#979797]">
                <svg className="mt-1 size-3" viewBox="0 0 12 12" stroke="#979797" strokeWidth="1.600"><path d="M6 0V12M0 6H12" /></svg>
                <span className="ml-6 h-[29px] w-[3px] bg-[#8b8b8b]" />
                <span className="ml-[10px]">俯视</span>
                <span className="ml-[15px] h-[29px] w-[3px] bg-[#8b8b8b]" />
                <span className="ml-[11px]">二维线框</span>
              </div>
              <TextEditor />
              <CommandLine />
            </div>
            <StatusBar />
          </main>
          <div className="absolute top-[786px] -left-[2px] h-[122px] w-[111px] border-[6px] border-[#fe0000]" />
        </div>
      </div>
    </div>
  );
}
